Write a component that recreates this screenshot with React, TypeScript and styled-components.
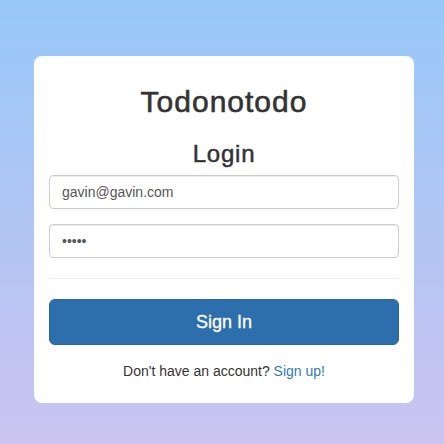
import React from "react";
import styled, { createGlobalStyle } from "styled-components";

const Global = createGlobalStyle`
  html, body { margin: 0; padding: 0; }
  body {
    width: 444px;
    height: 444px;
    overflow: hidden;
    font-family: "Liberation Sans", Arial, sans-serif;
    color: #333;
    background: linear-gradient(180deg, #97c8f8 0%, #cbc3f0 100%);
  }
  * { box-sizing: border-box; }
`;

const Page = styled.div`
  height: 444px;
  padding: 56px 30px 0 34px;
`;

const Card = styled.div`
  width: 380px;
  background: #fff;
  border-radius: 8px;
  padding: 29px 15px 22px;
  display: flex;
  flex-direction: column;
`;

const Title = styled.h2`
  margin: 0;
  font-size: 30px;
  line-height: 33px;
  font-weight: 500;
  letter-spacing: 1px;
  -webkit-text-stroke: 0.6px #333;
  text-align: center;
  color: #333;
`;

const Subtitle = styled.h3`
  margin: 23px 0 8px;
  font-size: 24px;
  line-height: 26px;
  font-weight: 500;
  letter-spacing: 0.8px;
  -webkit-text-stroke: 0.5px #333;
  text-align: center;
  color: #333;
`;

const Form = styled.form`
  display: flex;
  flex-direction: column;
  gap: 15px;
`;

const Input = styled.input`
  display: block;
  width: 100%;
  height: 34px;
  padding: 6px 12px;
  font-family: "Liberation Sans", Arial, sans-serif;
  font-size: 14px;
  color: #555;
  background: #fff;
  border: 1px solid #ccc;
  border-radius: 4px;
  box-shadow: inset 0 1px 1px rgba(0, 0, 0, 0.075);
  outline: none;
`;

const Divider = styled.hr`
  margin: 5px 0 5px;
  border: 0;
  border-top: 1px solid #eee;
`;

const Button = styled.button`
  height: 46px;
  width: 100%;
  font-family: "Liberation Sans", Arial, sans-serif;
  font-size: 18px;
  -webkit-text-stroke: 0.3px #fff;
  color: #fff;
  background: #2d6fad;
  border: 1px solid #2a67a0;
  border-radius: 6px;
  cursor: pointer;
`;

const Footer = styled.p`
  margin: 16px 0 0;
  font-size: 14px;
  line-height: 20px;
  text-align: center;
  color: #333;
`;

const Link = styled.a`
  color: #337ab7;
  text-decoration: none;
`;

export default function App() {
  return (
    <>
      <Global />
      <Page>
        <Card>
          <Title>Todonotodo</Title>
          <Subtitle>Login</Subtitle>
          <Form onSubmit={(e) => e.preventDefault()}>
            <Input type="email" defaultValue="gavin@gavin.com" />
            <Input type="password" defaultValue="12345" />
            <Divider />
            <Button type="submit">Sign In</Button>
          </Form>
          <Footer>
            Don't have an account? <Link href="#">Sign up!</Link>
          </Footer>
        </Card>
      </Page>
    </>
  );
}
